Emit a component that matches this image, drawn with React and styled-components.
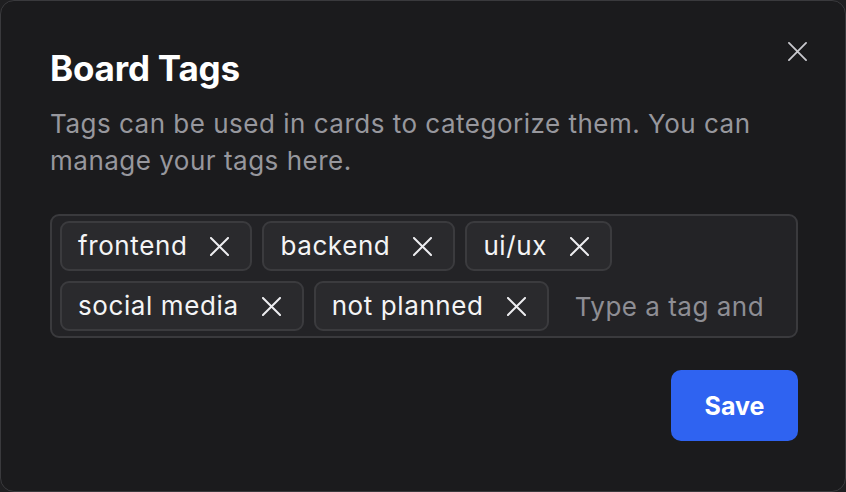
import React from "react";
import styled, { createGlobalStyle } from "styled-components";

const Global = createGlobalStyle`
  html, body { margin: 0; padding: 0; background: #1f1f21; }
  body { font-family: Inter, "Noto Sans", sans-serif; -webkit-font-smoothing: antialiased; }
  * { box-sizing: border-box; }
`;

const Dialog = styled.div`
  position: relative;
  width: 846px;
  height: 492px;
  background: #1b1b1d;
  border: 1px solid #3a3a3d;
  border-radius: 14px;
  padding: 46px 47px 0 49px;
  display: flex;
  flex-direction: column;
`;

const Title = styled.h2`
  margin: 0;
  font-size: 35px;
  font-weight: 700;
  line-height: 42px;
  color: #ffffff;
  letter-spacing: -0.2px;
`;

const Description = styled.p`
  margin: 16px 0 0;
  font-size: 26px;
  line-height: 37px;
  letter-spacing: 0.5px;
  color: #97979d;
  max-width: 720px;
`;

const CloseButton = styled.button`
  position: absolute;
  top: 38px;
  right: 36px;
  width: 24px;
  height: 24px;
  padding: 0;
  border: none;
  background: transparent;
  color: #c9c9ce;
  display: flex;
  align-items: center;
  justify-content: center;
`;

const TagBox = styled.div`
  margin-top: 35px;
  border: 2px solid #3a3a3d;
  background: #232326;
  border-radius: 9px;
  padding: 5px 8px;
  display: flex;
  flex-wrap: wrap;
  gap: 10px;
  overflow: hidden;
`;

const Tag = styled.span`
  display: inline-flex;
  align-items: center;
  height: 50px;
  padding: 0 21px 0 16px;
  gap: 23px;
  border: 2px solid #3b3b3e;
  border-radius: 9px;
  background: #2a2a2d;
  color: #f4f4f5;
  font-size: 26px;
  letter-spacing: 0.6px;
  line-height: 1;
`;

const TagRemove = styled.span`
  display: inline-flex;
  color: #ededf0;
`;

const TagInput = styled.input`
  flex: 1;
  min-width: 150px;
  height: 50px;
  border: none;
  outline: none;
  background: transparent;
  padding: 0 22px 0 16px;
  font-family: inherit;
  font-size: 26px;
  letter-spacing: 0.5px;
  color: #fff;
  &::placeholder { color: #8e8e94; }
`;

const Footer = styled.div`
  margin-top: 32px;
  display: flex;
  justify-content: flex-end;
`;

const SaveButton = styled.button`
  width: 127px;
  height: 71px;
  border: none;
  border-radius: 10px;
  background: #2f63f1;
  color: #fff;
  font-family: inherit;
  font-size: 25px;
  font-weight: 700;
`;

const XIcon = ({ size, weight = 2 }) => (
  <svg width={size} height={size} viewBox="0 0 20 20" fill="none" stroke="currentColor" strokeWidth={weight} strokeLinecap="round">
    <path d="M1 1 L19 19 M19 1 L1 19" />
  </svg>
);

const tags = ["frontend", "backend", "ui/ux", "social media", "not planned"];

export default function App() {
  return (
    <>
      <Global />
      <Dialog>
        <Title>Board Tags</Title>
        <Description>
          Tags can be used in cards to categorize them. You can manage your tags here.
        </Description>
        <CloseButton aria-label="Close"><XIcon size={19} weight={1.9} /></CloseButton>
        <TagBox>
          {tags.map((t) => (
            <Tag key={t}>
              {t}
              <TagRemove><XIcon size={19} weight={2.1} /></TagRemove>
            </Tag>
          ))}
          <TagInput placeholder="Type a tag and press Enter" />
        </TagBox>
        <Footer>
          <SaveButton>Save</SaveButton>
        </Footer>
      </Dialog>
    </>
  );
}
